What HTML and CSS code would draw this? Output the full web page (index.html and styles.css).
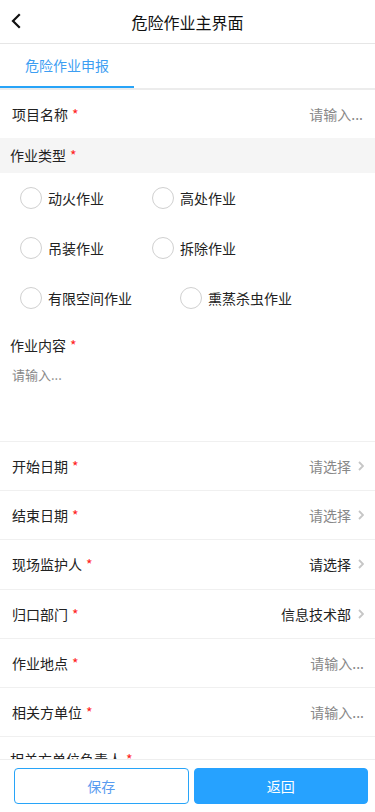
FILE: index.html
```html
<!DOCTYPE html>
<html lang="zh-CN">
<head>
    <meta charset="UTF-8">
    <meta name="viewport" content="width=device-width, initial-scale=1.0">
    <title>危险作业主界面</title>
    <link rel="stylesheet" href="styles.css">
</head>
<body>
    <header class="nav-bar">
        <span class="nav-back">
            <svg width="12" height="16" viewBox="0 0 12 16"><path d="M9 2 L3 8 L9 14" fill="none" stroke="#111" stroke-width="2.2" stroke-linecap="square"/></svg>
        </span>
        <h1 class="nav-title">危险作业主界面</h1>
    </header>

    <div class="tabs">
        <div class="tab active">危险作业申报</div>
    </div>

    <div class="form">
        <div class="cell first">
            <span class="label">项目名称<i class="req">*</i></span>
            <span class="value placeholder">请输入...</span>
        </div>

        <div class="section-title">作业类型<i class="req">*</i></div>
        <div class="radio-group">
            <label class="radio"><span class="circle"></span>动火作业</label>
            <label class="radio"><span class="circle"></span>高处作业</label>
            <label class="radio"><span class="circle"></span>吊装作业</label>
            <label class="radio"><span class="circle"></span>拆除作业</label>
            <label class="radio"><span class="circle"></span>有限空间作业</label>
            <label class="radio"><span class="circle"></span>熏蒸杀虫作业</label>
        </div>

        <div class="area">
            <div class="area-label">作业内容<i class="req">*</i></div>
            <div class="area-input">请输入...</div>
        </div>

        <div class="cell">
            <span class="label">开始日期<i class="req">*</i></span>
            <span class="value placeholder">请选择<svg class="arrow" width="6" height="10" viewBox="0 0 6 10"><path d="M1 1 L5 5 L1 9" fill="none" stroke="#c6c6c6" stroke-width="1.8"/></svg></span>
        </div>
        <div class="cell">
            <span class="label">结束日期<i class="req">*</i></span>
            <span class="value placeholder">请选择<svg class="arrow" width="6" height="10" viewBox="0 0 6 10"><path d="M1 1 L5 5 L1 9" fill="none" stroke="#c6c6c6" stroke-width="1.8"/></svg></span>
        </div>
        <div class="cell">
            <span class="label">现场监护人<i class="req">*</i></span>
            <span class="value">请选择<svg class="arrow" width="6" height="10" viewBox="0 0 6 10"><path d="M1 1 L5 5 L1 9" fill="none" stroke="#c6c6c6" stroke-width="1.8"/></svg></span>
        </div>
        <div class="cell">
            <span class="label">归口部门<i class="req">*</i></span>
            <span class="value">信息技术部<svg class="arrow" width="6" height="10" viewBox="0 0 6 10"><path d="M1 1 L5 5 L1 9" fill="none" stroke="#c6c6c6" stroke-width="1.8"/></svg></span>
        </div>
        <div class="cell">
            <span class="label">作业地点<i class="req">*</i></span>
            <span class="value placeholder">请输入...</span>
        </div>
        <div class="cell">
            <span class="label">相关方单位<i class="req">*</i></span>
            <span class="value placeholder">请输入...</span>
        </div>
        <div class="area">
            <div class="area-label">相关方单位负责人<i class="req">*</i></div>
            <div class="area-input short">请输入...</div>
        </div>
    </div>

    <footer class="footer">
        <button class="btn btn-plain">保存</button>
        <button class="btn btn-primary">返回</button>
    </footer>
</body>
</html>
```

FILE: styles.css
```css
body {
    margin: 0;
    font-family: "Noto Sans CJK SC", "Noto Sans", sans-serif;
    font-size: 14px;
    color: #222;
    background: #fff;
}
.nav-bar {
    height: 43px;
    border-bottom: 1px solid #e6e6e6;
    display: flex;
    align-items: center;
    justify-content: center;
    position: relative;
}
.nav-back {
    position: absolute;
    left: 10px;
    top: 13px;
}
.nav-title {
    margin: 0;
    font-size: 16px;
    font-weight: normal;
    color: #111;
}
.tabs {
    display: flex;
    border-bottom: 2px solid #ececec;
}
.tab {
    width: 134px;
    height: 42px;
    line-height: 42px;
    text-align: center;
    font-size: 14px;
    color: #888;
}
.tab.active {
    color: #3d9ef2;
    border-bottom: 2px solid #28a4f8;
}
.req {
    font-style: normal;
    color: #f22;
    margin-left: 4px;
}
.cell {
    height: 48.2px;
    padding: 0 11px 0 12px;
    display: flex;
    align-items: center;
    justify-content: space-between;
    border-bottom: 1px solid #f0f0f0;
}
.cell.first {
    height: 48px;
    border-bottom: none;
    padding-right: 12px;
}
.value {
    display: flex;
    align-items: center;
    color: #222;
}
.placeholder {
    color: #888;
}
.arrow {
    margin-left: 7px;
}
.section-title {
    background: #f5f5f5;
    height: 35px;
    line-height: 35px;
    padding: 0 10px;
}
.radio-group {
    display: flex;
    flex-wrap: wrap;
    padding-left: 20px;
}
.radio {
    display: flex;
    align-items: center;
    height: 50px;
    margin-right: 48px;
}
.radio:nth-child(odd) {
    min-width: 84px;
}
.circle {
    width: 20px;
    height: 20px;
    border: 1px solid #d0d0d0;
    border-radius: 50%;
    margin-right: 6px;
}
.area {
    border-bottom: 1px solid #f0f0f0;
}
.area-label {
    padding: 12px 10px 0;
    line-height: 20px;
}
.area-input {
    height: 76px;
    padding: 10px 12px 0;
    line-height: 20px;
    font-size: 13px;
    color: #888;
}
.area-input.short {
    height: 40px;
    margin-bottom: 60px;
}
.footer {
    position: fixed;
    left: 0;
    right: 0;
    bottom: 0;
    height: 53px;
    background: #fff;
    border-top: 1px solid #eee;
    display: flex;
    gap: 5px;
    padding: 8px 7px 0 14px;
    box-sizing: border-box;
}
.btn {
    flex: 1;
    height: 36px;
    border-radius: 4px;
    font-family: inherit;
    font-size: 14px;
}
.btn-plain {
    background: #fff;
    border: 1px solid #28a4f8;
    color: #5a9cf0;
}
.btn-primary {
    background: #26a2ff;
    border: 1px solid #26a2ff;
    color: #fff;
}
```
